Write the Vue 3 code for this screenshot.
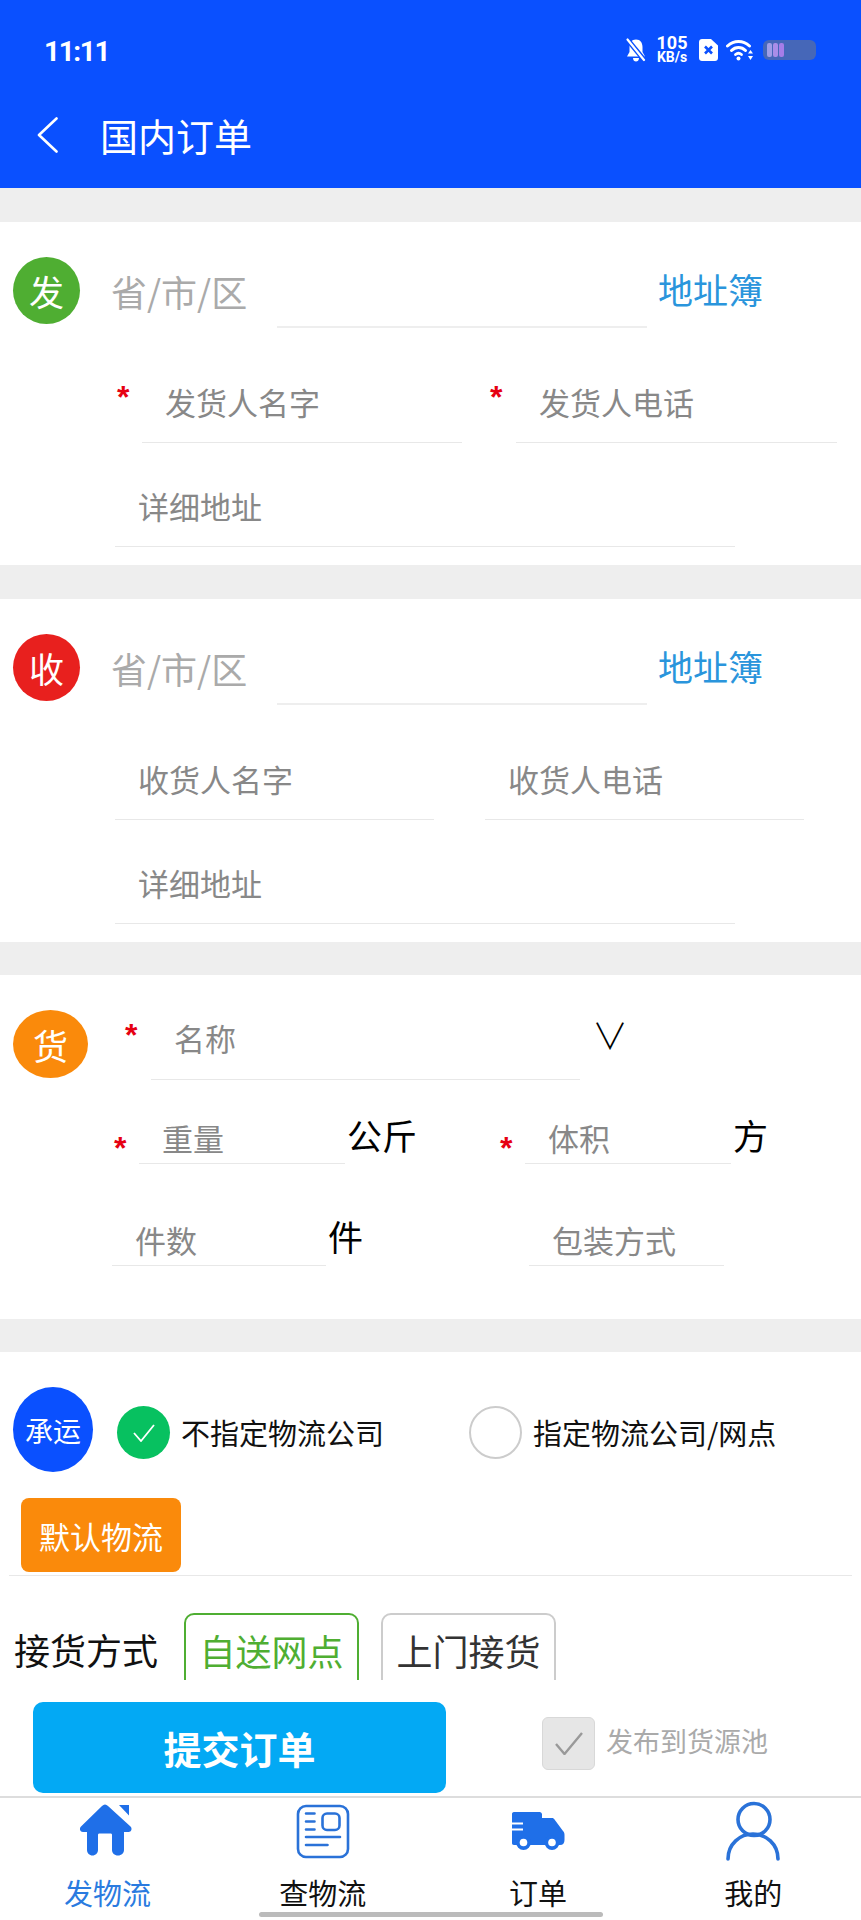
<script setup>
const tabs = [
  { label: '发物流', active: true, icon: 'home' },
  { label: '查物流', icon: 'doc' },
  { label: '订单', icon: 'truck' },
  { label: '我的', icon: 'user' },
]
</script>

<template>
  <div class="page">
    <header class="head">
      <div class="status">
        <span class="time">11:11</span>
        <div class="status-icons">
          <svg class="bell" width="20" height="24" viewBox="0 0 20 24">
            <path d="M10 1.500C5.500 1.500 3.500 5 3.500 9V14L1 18.500H19L16.500 14V9C16.500 5 14.500 1.500 10 1.500Z" fill="#fff" />
            <path d="M7 20H13C13 22.500 11.500 23.500 10 23.500C8.500 23.500 7 22.500 7 20Z" fill="#fff" />
            <path d="M1 1L19 23" stroke="#0a50ff" stroke-width="5" />
            <path d="M1.500 1.500L18 22" stroke="#fff" stroke-width="2.200" stroke-linecap="round" />
          </svg>
          <div class="speed"><span class="speed-num">105</span><span class="speed-unit">KB/s</span></div>
          <svg class="sim" width="19" height="22" viewBox="0 0 19 22">
            <path d="M3 0H12L19 6.500V19C19 20.700 17.700 22 16 22H3C1.300 22 0 20.700 0 19V3C0 1.300 1.300 0 3 0Z" fill="#fff" />
            <path d="M6 7.500L13 14.500M13 7.500L6 14.500" stroke="#0a50ff" stroke-width="2.600" />
          </svg>
          <svg class="wifi" width="28" height="22" viewBox="0 0 28 22">
            <path d="M1.500 7C8 1 17 1 23.500 7" fill="none" stroke="#fff" stroke-width="3" stroke-linecap="round" />
            <path d="M5.500 11.500C9.500 7.500 15.500 7.500 19.500 11.500" fill="none" stroke="#fff" stroke-width="3" stroke-linecap="round" />
            <path d="M9.500 15.500C11.500 13.800 13.500 13.800 15.500 15.500" fill="none" stroke="#fff" stroke-width="2.800" stroke-linecap="round" />
            <circle cx="12.500" cy="19.500" r="2" fill="#fff" />
            <path d="M24.500 11L27 14.500H22ZM24.500 21L22 17H27Z" fill="#fff" />
          </svg>
          <div class="battery">
            <i class="bar b1"></i><i class="bar b2"></i><i class="bar b3"></i>
          </div>
        </div>
      </div>
      <div class="nav">
        <svg class="back" width="21" height="36" viewBox="0 0 21 36">
          <path d="M19.500 1.500L2 18L19.500 34.500" fill="none" stroke="#fff" stroke-width="2.600" stroke-linecap="round" stroke-linejoin="round" />
        </svg>
        <span class="title">国内订单</span>
      </div>
    </header>

    <main class="body">
      <section class="card s1">
        <div class="top-row">
          <div class="badge green">发</div>
          <span class="region">省/市/区</span>
          <div class="line"></div>
          <span class="book">地址簿</span>
        </div>
        <div class="row two first">
          <span class="star">*</span>
          <div class="field w320">发货人名字</div>
          <span class="star second">*</span>
          <div class="field w321">发货人电话</div>
        </div>
        <div class="row detail">
          <div class="field w620">详细地址</div>
        </div>
      </section>

      <section class="card s2">
        <div class="top-row">
          <div class="badge red">收</div>
          <span class="region">省/市/区</span>
          <div class="line"></div>
          <span class="book">地址簿</span>
        </div>
        <div class="row two plain">
          <div class="field w319">收货人名字</div>
          <div class="field w319 next">收货人电话</div>
        </div>
        <div class="row detail">
          <div class="field w620">详细地址</div>
        </div>
      </section>

      <section class="card s3">
        <div class="goods-top">
          <div class="badge orange">货</div>
          <span class="star goods-star">*</span>
          <div class="field name">名称</div>
          <span class="vee">∨</span>
        </div>
        <div class="row weight">
          <div class="cell c386">
            <span class="star low">*</span>
            <div class="field w206">重量</div>
            <span class="unit">公斤</span>
          </div>
          <div class="cell">
            <span class="star low">*</span>
            <div class="field w206">体积</div>
            <span class="unit">方</span>
          </div>
        </div>
        <div class="row count">
          <div class="cell c417">
            <div class="field w214">件数</div>
            <span class="unit">件</span>
          </div>
          <div class="field w195">包装方式</div>
        </div>
      </section>

      <section class="card s4">
        <div class="carrier">
          <div class="badge blue">承运</div>
          <span class="radio on">
            <svg width="22" height="18" viewBox="0 0 22 18">
              <path d="M1 9L8 17L21 1" fill="none" stroke="#fff" stroke-width="1.800" />
            </svg>
          </span>
          <span class="radio-label fixed">不指定物流公司</span>
          <span class="radio off"></span>
          <span class="radio-label">指定物流公司/网点</span>
        </div>
        <button class="default">默认物流</button>
        <div class="divider"></div>
        <div class="pickup">
          <span class="pickup-label">接货方式</span>
          <div class="tab-opt sel">自送网点</div>
          <div class="tab-opt">上门接货</div>
        </div>
      </section>
    </main>

    <div class="action">
      <button class="submit">提交订单</button>
      <span class="check">
        <svg width="28" height="23" viewBox="0 0 28 23">
          <path d="M1 12L9.500 22L27 1" fill="none" stroke="#999" stroke-width="2.400" />
        </svg>
      </span>
      <span class="check-label">发布到货源池</span>
    </div>

    <nav class="tabbar">
      <div v-for="t in tabs" :key="t.label" class="tab" :class="{ active: t.active }">
        <svg width="80" height="70" viewBox="-2 0 80 70">
          <g v-if="t.icon === 'home'" fill="#1f6fe8">
            <path d="M35 6.500C36 6.500 37 7 38 8L60.500 28.500C62.500 30.500 61.500 34 58.500 34H54V52C54 55 51.500 57.500 48 57.500C44.500 57.500 42 55 42 52V37C42 36 41.500 35.500 40.500 35.500H29.500C28.500 35.500 28 36 28 37V52C28 55 25.500 57.500 22.500 57.500C19.500 57.500 17 55 17 52V34H13C10 34 9 30.500 11 28.500L32 8C33 7 34 6.500 35 6.500Z" />
            <path d="M49 7H59V17.500Z" />
          </g>
          <g v-else-if="t.icon === 'doc'" fill="none" stroke="#2a72d8" stroke-width="2.600" stroke-linecap="round">
            <rect x="13" y="8" width="50" height="51" rx="8" />
            <rect x="37.500" y="15.500" width="17" height="16.500" rx="4.500" />
            <path d="M21 15.500H29.500M21 23.500H29.500M21 31.500H29.500M21 39H55M21 47H42.500" />
          </g>
          <g v-else-if="t.icon === 'truck'">
            <path d="M14 14H39.500C41 14 42 15 42 16.500V20H52C53 20 54 20.500 54.500 21.500L63 33C64 34 64.500 35 64.500 37V42C64.500 45 63 47 60 47H14C12.500 47 12 46 12 45V16C12 15 12.500 14 14 14Z" fill="#1f6fe8" />
            <path d="M11 25.500H23M11 31.500H23" stroke="#fff" stroke-width="2" />
            <circle cx="23.500" cy="44.500" r="7.500" fill="#1f6fe8" />
            <circle cx="52" cy="44.500" r="7.500" fill="#1f6fe8" />
            <circle cx="23.500" cy="44.500" r="3.800" fill="#fff" />
            <circle cx="52" cy="44.500" r="3.800" fill="#fff" />
          </g>
          <g v-else fill="none" stroke="#2a72d8" stroke-width="3.600" stroke-linecap="round">
            <circle cx="39" cy="21.500" r="16" />
            <path d="M13 61C13 46 25 36 38 36C51 36 63 46 63 61" />
          </g>
        </svg>
        <span class="tab-label">{{ t.label }}</span>
      </div>
      <div class="indicator"></div>
    </nav>
  </div>
</template>

<style>
html, body { margin: 0; padding: 0; background: #fff; }
</style>

<style scoped>
.page {
  width: 861px;
  height: 1920px;
  display: flex;
  flex-direction: column;
  overflow: hidden;
  background: #fff;
  font-family: "Noto Sans CJK SC", "Noto Sans", sans-serif;
}
.head { height: 188px; flex: none; background: #0a50ff; color: #fff; }
.status {
  height: 100px;
  display: flex;
  align-items: center;
  justify-content: space-between;
  padding: 0 45px;
  box-sizing: border-box;
}
.time { font-family: Roboto, sans-serif; font-size: 28px; font-weight: 700; letter-spacing: -1.4px; margin-left: -1px; position: relative; top: 1px; }
.status-icons { display: flex; align-items: center; }
.speed { display: flex; flex-direction: column; align-items: center; margin-left: 11px; font-family: Roboto, sans-serif; font-weight: 700; color: #fff; line-height: 14px; width: 30px; }
.speed-num { font-size: 18px; }
.speed-unit { font-size: 14px; white-space: nowrap; }
.sim { margin-left: 12px; }
.wifi { margin-left: 8px; }
.battery {
  width: 53px;
  height: 20px;
  margin-left: 9px;
  border-radius: 6px;
  background: #4667b8;
  box-sizing: border-box;
  padding: 3px 4px;
  display: flex;
  gap: 1px;
}
.bar { display: block; width: 5px; height: 14px; border-radius: 2px; }
.b1 { background: #9f9de8; }
.b2 { background: #a98ee8; }
.b3 { background: #a57de8; }
.nav { height: 70px; display: flex; align-items: center; padding-left: 37px; }
.title { font-size: 38px; margin-left: 42px; line-height: 70px; }

.body { height: 1492px; flex: none; background: #eee; padding-top: 34px; box-sizing: border-box; overflow: hidden; }
.card { background: #fff; }
.s1 { height: 343px; margin-bottom: 34px; }
.s2 { height: 343px; margin-bottom: 33px; }
.s3 { height: 344px; margin-bottom: 33px; }
.s4 { height: 400px; padding-top: 35px; box-sizing: border-box; }

.top-row { display: flex; align-items: flex-start; padding: 35px 0 0 13px; height: 105px; box-sizing: border-box; }
.badge { flex: none; display: flex; align-items: center; justify-content: center; border-radius: 50%; color: #fff; font-size: 35px; }
.green { width: 67px; height: 67px; background: #4fae32; }
.red { width: 67px; height: 67px; background: #e8201e; }
.orange { width: 75px; height: 68px; background: #fa8a0b; }
.blue { width: 80px; height: 85px; background: #0a50ff; font-size: 28px; }
.region { width: 166px; margin-left: 31px; font-size: 36px; line-height: 68px; color: #aaa; white-space: nowrap; }
.line { width: 370px; height: 69px; border-bottom: 2px solid #eee; }
.book { margin-left: 11px; font-size: 35px; line-height: 63px; color: #2a95dc; white-space: nowrap; }

.row { display: flex; align-items: flex-end; }
.two { height: 116px; }
.first { padding-left: 117px; }
.plain { padding-left: 115px; }
.detail { height: 104px; padding-left: 115px; }

.field {
  flex: none;
  box-sizing: border-box;
  border-bottom: 1px solid #e8e8e8;
  padding-left: 23px;
  font-size: 31px;
  height: 60px;
  line-height: 38px;
  color: #888;
  white-space: nowrap;
}
.w320 { width: 320px; }
.w321 { width: 321px; }
.w319 { width: 319px; }
.w620 { width: 620px; }
.next { margin-left: 51px; }
.star {
  flex: none;
  width: 25px;
  align-self: flex-start;
  font-family: "Liberation Sans", sans-serif;
  font-size: 32px;
  font-weight: 700;
  line-height: 30px;
  color: #e60012;
}
.first .star { margin-top: 55px; }
.second { width: 26px; margin-left: 28px; }

.goods-top { display: flex; align-items: flex-start; padding: 35px 0 0 13px; height: 105px; box-sizing: border-box; }
.goods-star { width: 26px; margin-left: 37px; margin-top: 10px; }
.name { width: 429px; height: 70px; line-height: 56px; }
.vee { margin-left: 12px; font-size: 36px; line-height: 48px; color: #000; font-weight: 300; }
.weight { height: 84px; padding-left: 114px; }
.count { height: 102px; padding-left: 112px; }
.cell { display: flex; align-items: flex-end; flex: none; }
.c386 { width: 386px; }
.c417 { width: 417px; }
.low { align-self: flex-end; margin-bottom: 1px; }
.w206 { width: 206px; }
.w214 { width: 214px; }
.w195 { width: 195px; }
.weight .field { height: 52px; line-height: 52px; }
.count .field { height: 52px; line-height: 52px; }
.unit { margin-left: 2px; font-size: 35px; line-height: 50px; color: #000; margin-bottom: 4px; }
.count .unit { margin-bottom: 5px; }

.carrier { display: flex; align-items: flex-start; padding-left: 13px; }
.radio { flex: none; box-sizing: border-box; width: 53px; height: 53px; border-radius: 50%; margin-top: 19px; display: flex; align-items: center; justify-content: center; }
.on { margin-left: 24px; background: #07c160; }
.off { margin-left: 0; border: 2px solid #ccc; }
.radio-label { font-size: 29px; line-height: 53px; margin-top: 19px; margin-left: 11px; color: #111; white-space: nowrap; }
.fixed { width: 288px; }
.default {
  display: block;
  margin: 26px 0 0 21px;
  width: 160px;
  height: 74px;
  border: 0;
  padding: 0;
  border-radius: 8px;
  background: #fa8a0b;
  color: #fff;
  font-family: inherit;
  font-size: 31px;
}
.divider { height: 1px; margin: 3px 9px 0; background: #e8e8e8; }
.pickup { display: flex; align-items: flex-start; padding: 37px 0 0 14px; }
.pickup-label { width: 170px; font-size: 36px; line-height: 72px; color: #111; white-space: nowrap; }
.tab-opt {
  flex: none;
  box-sizing: border-box;
  width: 175px;
  height: 100px;
  margin-right: 22px;
  border: 2px solid #ccc;
  border-radius: 10px;
  font-size: 36px;
  line-height: 70px;
  text-align: center;
  color: #333;
}
.sel { border-color: #4fae32; color: #4fae32; }

.action { height: 116px; flex: none; display: flex; align-items: flex-start; padding: 22px 0 0 33px; box-sizing: border-box; background: #fff; }
.submit {
  width: 413px;
  height: 91px;
  border: 0;
  padding: 0;
  border-radius: 10px;
  background: #03a9f4;
  color: #fff;
  font-family: inherit;
  font-size: 38px;
  font-weight: 700;
}
.check {
  box-sizing: border-box;
  width: 53px;
  height: 53px;
  margin: 15px 0 0 96px;
  border: 1px solid #d8d8d8;
  border-radius: 6px;
  background: #e6e6e6;
  display: flex;
  align-items: center;
  justify-content: center;
}
.check-label { margin: 15px 0 0 11px; font-size: 27px; line-height: 48px; color: #aaa; white-space: nowrap; }

.tabbar { position: relative; flex: 1; display: flex; border-top: 2px solid #ddd; background: #fff; }
.tab { flex: 1; display: flex; flex-direction: column; align-items: center; }
.tab svg { display: block; }
.tab-label { font-size: 29px; line-height: 48px; color: #111; }
.active .tab-label { color: #2a7be0; }
.indicator { position: absolute; left: 259px; bottom: 3px; width: 344px; height: 5px; border-radius: 3px; background: #bbb; }
</style>
